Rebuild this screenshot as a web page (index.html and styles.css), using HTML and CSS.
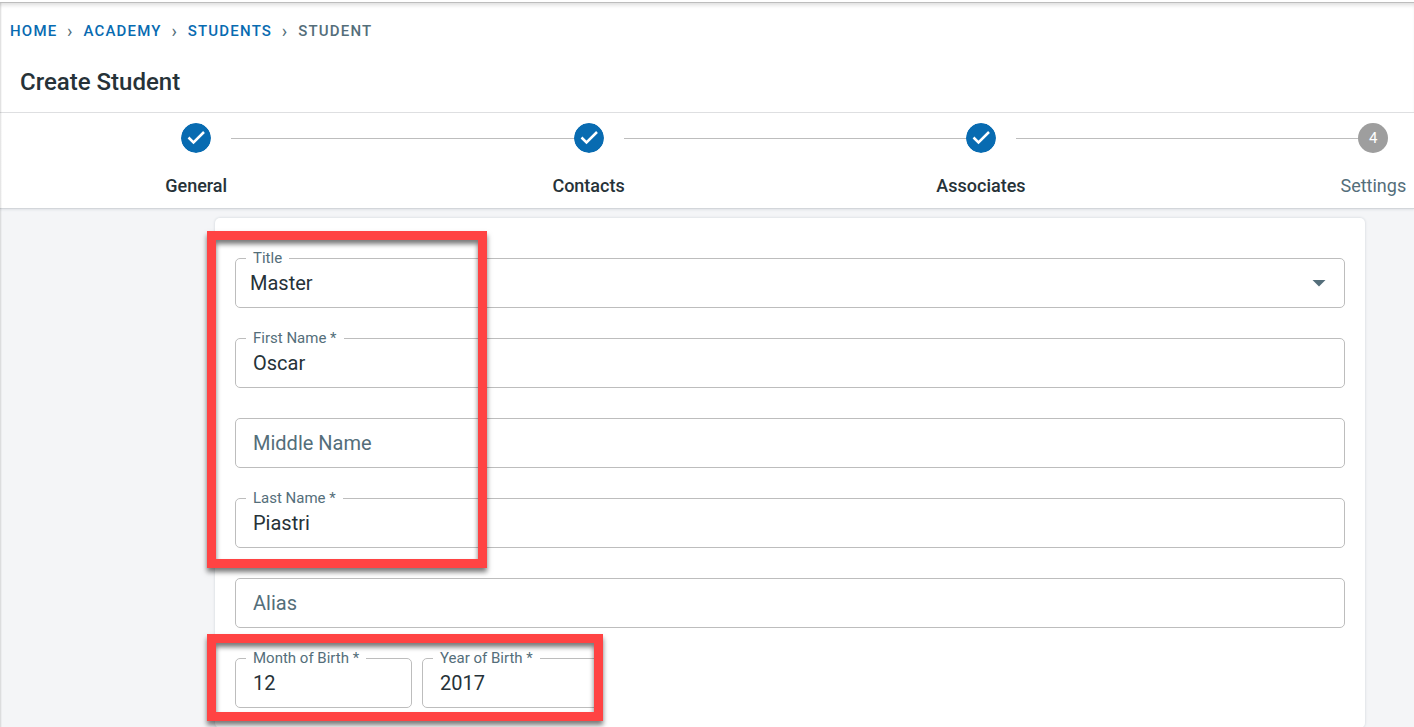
FILE: index.html
```html
<!DOCTYPE html>
<html lang="en">
<head>
<meta charset="utf-8">
<title>Create Student</title>
<link rel="stylesheet" href="styles.css">
</head>
<body>
<div class="app">
  <header class="header">
    <nav class="crumbs" aria-label="Breadcrumb">
      <a href="#">HOME</a><span class="sep">›</span>
      <a href="#">ACADEMY</a><span class="sep">›</span>
      <a href="#">STUDENTS</a><span class="sep">›</span>
      <span>STUDENT</span>
    </nav>
    <h1 class="title">Create Student</h1>
  </header>

  <section class="steps-bar">
    <ol class="steps">
      <li class="step">
        <svg class="badge" viewBox="0 0 30 30" aria-hidden="true"><circle cx="15" cy="15" r="15"/><path d="M7.500 14.500l5 5L23 9"/></svg>
        <span class="step-label">General</span>
      </li>
      <li class="step">
        <svg class="badge" viewBox="0 0 30 30" aria-hidden="true"><circle cx="15" cy="15" r="15"/><path d="M7.500 14.500l5 5L23 9"/></svg>
        <span class="step-label">Contacts</span>
      </li>
      <li class="step">
        <svg class="badge" viewBox="0 0 30 30" aria-hidden="true"><circle cx="15" cy="15" r="15"/><path d="M7.500 14.500l5 5L23 9"/></svg>
        <span class="step-label">Associates</span>
      </li>
      <li class="step pending">
        <span class="badge number">4</span>
        <span class="step-label">Settings</span>
      </li>
    </ol>
  </section>

  <main class="content">
    <form class="card">
      <fieldset class="field">
        <legend><label for="title">Title</label></legend>
        <div class="select-wrap">
          <select id="title" class="control"><option>Master</option></select>
          <svg class="arrow" viewBox="0 0 14 7" aria-hidden="true"><path d="M0.500 0h13L7 6.500z"/></svg>
        </div>
      </fieldset>
      <fieldset class="field">
        <legend><label for="first">First Name *</label></legend>
        <input id="first" class="control" type="text" value="Oscar">
      </fieldset>
      <div class="field plain">
        <input class="control" type="text" placeholder="Middle Name" aria-label="Middle Name">
      </div>
      <fieldset class="field">
        <legend><label for="last">Last Name *</label></legend>
        <input id="last" class="control" type="text" value="Piastri">
      </fieldset>
      <div class="field plain">
        <input class="control" type="text" placeholder="Alias" aria-label="Alias">
      </div>
      <div class="birth">
        <fieldset class="field">
          <legend><label for="month">Month of Birth *</label></legend>
          <input id="month" class="control" type="text" value="12">
        </fieldset>
        <fieldset class="field">
          <legend><label for="year">Year of Birth *</label></legend>
          <input id="year" class="control" type="text" value="2017">
        </fieldset>
      </div>
      <div class="mark mark-names"></div>
      <div class="mark mark-birth"></div>
    </form>
  </main>
</div>
</body>
</html>
```

FILE: styles.css
```css
* {
  box-sizing: border-box;
}

body {
  margin: 0;
  background: #fff;
  color: #263238;
  font-family: Roboto, "Liberation Sans", sans-serif;
  overflow: hidden;
}

.app {
  position: relative;
  height: 100vh;
  display: flex;
  flex-direction: column;
  padding-top: 2px;
  overflow: hidden;
}

/* soft edge cast by the side navigation */
.app::after {
  content: "";
  position: absolute;
  inset: 3px auto 0 0;
  width: 2px;
  background: linear-gradient(to right, #0002, #0000);
}

.header {
  border-top: 1px solid #bdbdbd;
  border-bottom: 1px solid #dedfe0;
  box-shadow: inset 0 4px 4px -2px #dcdcdc;
}

.crumbs {
  display: flex;
  align-items: center;
  padding: 18px 10px 0;
  font-size: 15px;
  line-height: 20px;
  font-weight: 500;
  letter-spacing: 0.08em;
  color: #546e7a;
}

.crumbs a {
  color: #086bb1;
  text-decoration: none;
}

.sep {
  width: 26px;
  font-size: 18px;
  font-weight: 400;
  text-align: center;
}

.title {
  margin: 0;
  padding: 26px 20px 15px;
  font-size: 24px;
  line-height: 30px;
  font-weight: 500;
}

.steps-bar {
  flex: none;
  position: relative;
  background: #fff;
  border-bottom: 1px solid #d3d6da;
  box-shadow: 0 1px 2px #dfe2e6;
}

.steps {
  width: 111%;
  margin: 0;
  padding: 10px 0;
  list-style: none;
  display: grid;
  grid-template-columns: repeat(4, 1fr);
}

.step {
  position: relative;
  display: flex;
  flex-direction: column;
  align-items: center;
  gap: 20px;
}

.step + .step::before {
  content: "";
  position: absolute;
  top: 15px;
  left: calc(-50% + 35px);
  right: 50%;
  height: 1px;
  background: #bdbdbd;
}

.badge {
  position: relative;
  width: 30px;
  height: 30px;
  border-radius: 50%;
  fill: #086bb1;
}

.badge path {
  fill: none;
  stroke: #fff;
  stroke-width: 2.500;
}

.number {
  background: #9e9e9e;
  color: #fff;
  font-size: 15px;
  line-height: 30px;
  text-align: center;
}

.step-label {
  font-size: 18px;
  line-height: 25px;
  font-weight: 500;
}

.pending .step-label {
  font-weight: 400;
  color: #546e7a;
}

.content {
  flex: 1;
  padding: 9px 49px 0 215px;
  background: #f4f5f7;
}

.card {
  position: relative;
  min-height: 100%;
  padding: 32px 20px 20px;
  display: flex;
  flex-direction: column;
  gap: 22px;
  background: #fff;
  border-radius: 5px;
  box-shadow: 0 0 2px 1px #e1e4e8;
}

.field {
  min-width: 0;
  margin: 0;
  padding: 0 0 0 10px;
  border: 1px solid #bdbdbd;
  border-radius: 5px;
}

.field legend {
  padding: 0 7px;
  font-size: 15px;
  line-height: 17px;
  height: 17px;
  color: #546e7a;
}

.control {
  display: block;
  width: 100%;
  height: 40px;
  padding: 0 7px 8px;
  border: 0;
  outline: 0;
  background: transparent;
  color: #263238;
  font: inherit;
  font-size: 20px;
}

.plain {
  margin-top: 8px;
}

.plain .control {
  height: 48px;
  padding-bottom: 0;
}

.control::placeholder {
  color: #546e7a;
  opacity: 1;
}

.select-wrap {
  display: flex;
  align-items: center;
  padding: 0 18px 8px 0;
}

select.control {
  appearance: none;
  height: 32px;
  padding: 0 4px;
}

.arrow {
  flex: none;
  width: 14px;
  height: 7px;
  fill: #546e7a;
}

.birth {
  display: flex;
  gap: 10px;
}

.birth .field {
  width: 177px;
}

.mark {
  position: absolute;
  left: -8px;
  border: 9px solid #ff4343;
  box-shadow: 0 4px 5px #0008, inset 0 4px 5px #0008;
  pointer-events: none;
}

.mark-names {
  top: 13px;
  width: 280px;
  height: 337px;
}

.mark-birth {
  top: 416px;
  width: 396px;
  height: 87px;
}
```
